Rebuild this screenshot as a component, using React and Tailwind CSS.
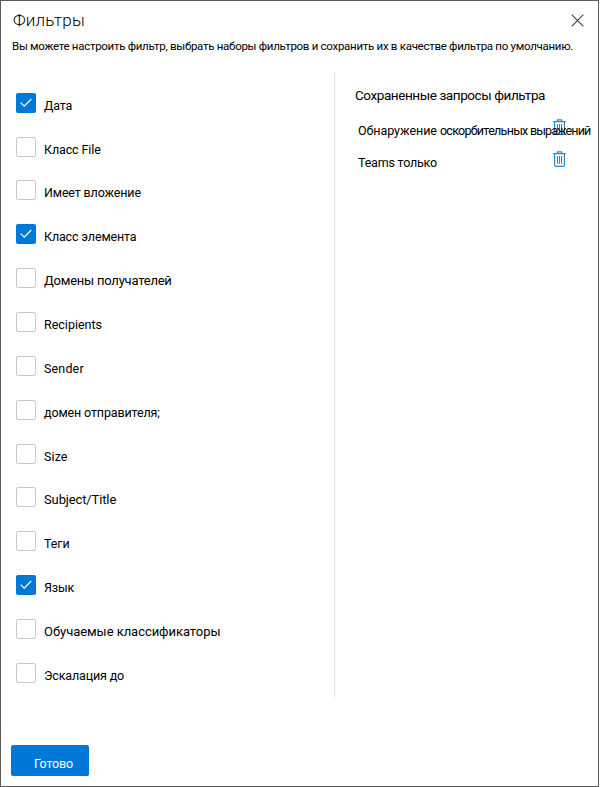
const filters = [
  { label: 'Дата', checked: true, text: 'text-[12.5px] tracking-[-0.2px]' },
  { label: 'Класс File', text: 'text-[12.5px] tracking-[-0.12px]' },
  { label: 'Имеет вложение', text: 'text-[12.5px] tracking-[-0.15px]' },
  { label: 'Класс элемента', checked: true, text: 'text-[12.5px] tracking-[-0.15px]' },
  { label: 'Домены получателей', text: 'text-[13px] tracking-[-0.22px]' },
  { label: 'Recipients', text: 'text-[12.5px] tracking-[0px]' },
  { label: 'Sender', text: 'text-[12.5px] tracking-[0.15px]' },
  { label: 'домен отправителя;', text: 'text-[12.5px] tracking-[-0.13px]' },
  { label: 'Size', text: 'text-[12.5px] tracking-[0.1px]' },
  { label: 'Subject/Title', text: 'text-[13px] tracking-[-0.13px]' },
  { label: 'Теги', text: 'text-[12.5px] tracking-[-0.1px]' },
  { label: 'Язык', checked: true, text: 'text-[12.5px] tracking-[-0.15px]' },
  { label: 'Обучаемые классификаторы', text: 'text-[13px] tracking-[-0.05px]' },
  { label: 'Эскалация до', text: 'text-[12.5px] tracking-[-0.15px]' },
];

function Checkbox({ checked }) {
  return (
    <span
      className={
        checked
          ? 'flex size-5 shrink-0 items-center justify-center rounded-[2px] bg-[#0078d7]'
          : 'flex size-5 shrink-0 rounded-[2px] border border-[#c8c8c8] bg-white'
      }
    >
      {checked && (
        <svg width="20" height="20" viewBox="0 0 20 20" fill="none" stroke="#fff" strokeWidth="1.15">
          <path d="M4.7 9.7 8.2 13.2 15.3 6" />
        </svg>
      )}
    </span>
  );
}

function TrashIcon() {
  return (
    <svg width="14" height="17" viewBox="0 0 14 17" fill="none" stroke="#2b88d0" strokeWidth="1.2">
      <path d="M.3 2.7H12.7M4.4 2.5V.8H8.6V2.5M1.6 3V14Q1.6 15.4 3 15.4H10Q11.4 15.4 11.4 14V3" />
      <path strokeWidth="1" d="M4.5 5V12.8M6.5 5V12.8M8.5 5V12.8" />
    </svg>
  );
}

export default function App() {
  return (
    <div className="h-[787px] w-[600px] bg-white font-['Roboto','Liberation_Sans',sans-serif] text-black">
      <div className="flex h-[787px] w-[599px] flex-col border border-[#5a5a5a]">
        <header className="flex h-[38px] shrink-0 items-center justify-between pr-[14px] pl-3">
          <h1 className="text-[17px] leading-5 font-light tracking-[0.2px]">Фильтры</h1>
          <button aria-label="Закрыть">
            <svg width="13" height="13" viewBox="0 0 13 13" fill="none" stroke="#444" strokeWidth="1.1">
              <path d="M.7.7 12.3 12.3M12.3.7.7 12.3" />
            </svg>
          </button>
        </header>
        <p className="h-[34px] shrink-0 pl-[11px] text-[11.5px] leading-[14px] tracking-[-0.285px] whitespace-nowrap">
          Вы можете настроить фильтр, выбрать наборы фильтров и сохранить их в качестве фильтра по умолчанию.
        </p>
        <main className="flex h-[624px] shrink-0">
          <ul className="flex w-[334px] shrink-0 flex-col justify-between border-r border-[#e1e1e1] pt-[19.75px] pb-[14.25px] pl-[15px]">
            {filters.map((f) => (
              <li key={f.label} className="flex h-5 gap-2">
                <Checkbox checked={f.checked} />
                <span className={`mt-[3px] leading-5 whitespace-nowrap ${f.text}`}>{f.label}</span>
              </li>
            ))}
          </ul>
          <section className="min-w-0 grow pt-3 pl-5">
            <h2 className="text-[13.5px] leading-5 tracking-[-0.42px]">Сохраненные запросы фильтра</h2>
            <ul className="mt-[14px] pl-[3px]">
              <li className="relative flex h-8">
                <span className="relative z-10 mt-[2px] text-[12.5px] leading-5 whitespace-nowrap">
                  <span className="tracking-[-0.05px]">Обнаружение </span>
                  <span className="tracking-[-0.72px]">оскорбительных </span>
                  <span className="tracking-[-0.9px]">выражений</span>
                </span>
                <span className="absolute top-0 left-[195px]">
                  <TrashIcon />
                </span>
              </li>
              <li className="flex h-8">
                <span className="mt-[2px] w-[195px] text-[12.5px] leading-5 tracking-[-0.2px]">Teams только</span>
                <TrashIcon />
              </li>
            </ul>
          </section>
        </main>
        <footer className="mt-12 pl-[10px]">
          <button className="flex h-[31px] w-[78px] items-start justify-center rounded-[2px] bg-[#0078d7] pt-[8.5px] pl-[7px] text-[12.5px] leading-5 tracking-[-0.15px] text-white">
            Готово
          </button>
        </footer>
      </div>
    </div>
  );
}
